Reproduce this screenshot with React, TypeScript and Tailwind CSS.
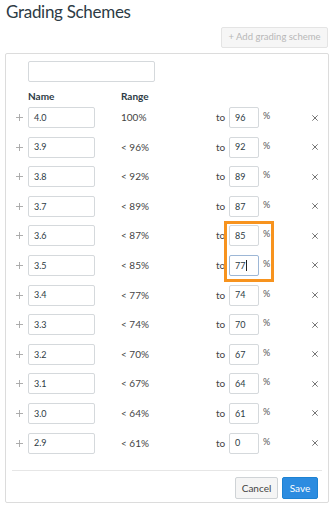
import React from 'react';

type Row = { name: string; range: string; min: string };

const rows: Row[] = [
  { name: '4.0', range: '100%', min: '96' },
  { name: '3.9', range: '< 96%', min: '92' },
  { name: '3.8', range: '< 92%', min: '89' },
  { name: '3.7', range: '< 89%', min: '87' },
  { name: '3.6', range: '< 87%', min: '85' },
  { name: '3.5', range: '< 85%', min: '77' },
  { name: '3.4', range: '< 77%', min: '74' },
  { name: '3.3', range: '< 74%', min: '70' },
  { name: '3.2', range: '< 70%', min: '67' },
  { name: '3.1', range: '< 67%', min: '64' },
  { name: '3.0', range: '< 64%', min: '61' },
  { name: '2.9', range: '< 61%', min: '0' },
];

const PlusIcon = () => (
  <svg width="7" height="7" viewBox="0 0 7 7" className="text-[#a5a5a5]">
    <path d="M3.5 0V7M0 3.5H7" stroke="currentColor" strokeWidth="0.9" />
  </svg>
);

const CloseIcon = () => (
  <svg width="6" height="6" viewBox="0 0 6 6" className="text-[#666]">
    <path d="M0.3 0.3L5.7 5.7M5.7 0.3L0.3 5.7" stroke="currentColor" strokeWidth="0.9" />
  </svg>
);

const SchemeRow: React.FC<{ row: Row; focused?: boolean }> = ({ row, focused }) => (
  <div className="flex h-[29.6px] items-start">
    <div className="flex h-[21px] w-[22px] items-center justify-end pr-[5px]">
      <PlusIcon />
    </div>
    <div className="flex h-[21px] w-[67px] items-center rounded-[2px] border border-[#d5d9dc] pl-[5px] text-[9px] text-[#2d3b45]">
      {row.name}
    </div>
    <div className="w-[26px]" />
    <div className="flex h-[21px] w-[95px] items-center text-[10px] text-[#444]">{row.range}</div>
    <div className="flex h-[21px] w-[13px] items-center text-[10px] text-[#444]">to</div>
    <div
      className={
        focused
          ? 'flex h-[21px] w-[30px] items-center rounded-[2px] border border-[#9db7d6] pl-[5px] text-[9px] text-[#2d3b45]'
          : 'flex h-[21px] w-[30px] items-center rounded-[2px] border border-[#d5d9dc] pl-[5px] text-[9px] text-[#2d3b45]'
      }
    >
      {row.min}
      {focused && <span className="ml-[1px] h-[11px] w-px bg-[#222]" />}
    </div>
    <div className="ml-[4px] h-[21px] pt-[2px] text-[9px] text-[#555]">%</div>
    <div className="flex h-[21px] flex-1 items-center justify-end pr-[10px]">
      <CloseIcon />
    </div>
  </div>
);

const App: React.FC = () => {
  return (
    <div className="relative h-[512px] w-[335px] overflow-hidden bg-white font-['Lato','Liberation_Sans',sans-serif]">
      <h1 className="pl-[6px] pt-[1px] text-[17px] leading-[22px] tracking-[-0.3px] text-[#2d3b45]">Grading Schemes</h1>

      <div className="mt-[4px] flex justify-end pr-[7px]">
        <button className="flex h-[21px] w-[107px] items-center justify-center rounded-[2px] border border-[#e4e4e4] bg-[#f6f6f6] text-[9.5px] text-[#b8b8b8]">
          + Add grading scheme
        </button>
      </div>

      <div className="ml-[5px] mt-[5px] w-[324px] rounded-[2px] border border-[#dcdcdc] pb-[3px]">
        <div className="ml-[22px] mt-[7px] h-[21px] w-[127px] rounded-[2px] border border-[#d5d9dc]" />

        <div className="flex h-[25px] items-center pt-[3px] text-[10px] font-bold text-[#2d3b45]">
          <span className="ml-[22px] w-[93px]">Name</span>
          <span>Range</span>
        </div>

        {rows.map((row) => (
          <SchemeRow key={row.name} row={row} focused={row.name === '3.5'} />
        ))}

        <div className="mx-[6px] mt-[8px] border-t border-[#e6e6e6]" />

        <div className="mt-[6px] flex justify-end gap-[4px] pr-[10px]">
          <button className="h-[22px] w-[43px] rounded-[2px] border border-[#cfd3d6] bg-[#f5f5f5] text-[10px] text-[#444]">
            Cancel
          </button>
          <button className="h-[22px] w-[36px] rounded-[2px] border border-[#1d82d2] bg-[#2c8ce0] text-[10px] text-white">
            Save
          </button>
        </div>
      </div>

      <div className="pointer-events-none absolute left-[224px] top-[221px] h-[61px] w-[50px] border-[3px] border-[#f7931e]" />
    </div>
  );
};

export default App;
